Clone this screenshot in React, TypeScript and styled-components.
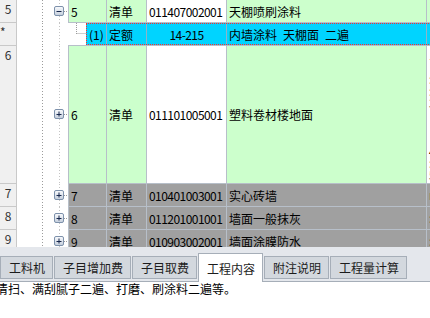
import React from "react";
import styled, { createGlobalStyle } from "styled-components";

const LINE = "#b7bfc9";
const GREEN = "#ccffcc";
const CYAN = "#00d4ff";
const GRAY = "#a0a0a0";
const WHITE = "#ffffff";

const GlobalStyle = createGlobalStyle`
  html, body { margin: 0; padding: 0; background: #fff; overflow: hidden; }
  body { font-family: "Noto Sans CJK SC", sans-serif; }
`;

const Root = styled.div`
  width: 430px;
  height: 318px;
  display: flex;
  flex-direction: column;
  overflow: hidden;
  font-family: "Noto Sans CJK SC", sans-serif;
  font-size: 12px;
  color: #000;
`;

const Grid = styled.div`
  height: 247px;
  flex-shrink: 0;
  display: flex;
  flex-direction: column;
  overflow: hidden;
  background: #fff;
`;

const Row = styled.div<{ $h: number }>`
  display: flex;
  height: ${(p) => p.$h + 1}px;
  flex-shrink: 0;
`;

const RowHead = styled.div<{ $left?: boolean }>`
  width: 17px;
  flex-shrink: 0;
  box-sizing: border-box;
  background: #f0f0f0;
  border-right: 1px solid #c9c9c9;
  border-bottom: 1px solid #c9c9c9;
  line-height: 17px;
  text-align: ${(p) => (p.$left ? "left" : "center")};
  color: #333;
  font-size: 12px;
`;

const Gutter = styled.div<{ $w: number }>`
  width: ${(p) => p.$w}px;
  flex-shrink: 0;
  background: #fff;
  svg { display: block; }
`;

const Spacer = styled.div`
  width: 18px;
  flex-shrink: 0;
  box-sizing: border-box;
  border-bottom: 1px solid ${LINE};
  background: #fff;
  svg { display: block; }
`;

const Cell = styled.div<{ $w: number; $bg: string; $center?: boolean; $first?: boolean; $code?: boolean }>`
  width: ${(p) => p.$w}px;
  flex-shrink: 0;
  box-sizing: border-box;
  background: ${(p) => p.$bg};
  border-right: 1px solid ${LINE};
  border-bottom: 1px solid ${LINE};
  ${(p) => (p.$first ? `border-left: 1px solid ${LINE};` : "")}
  display: flex;
  align-items: center;
  justify-content: ${(p) => (p.$center ? "center" : "flex-start")};
  padding: 0 2px;
  white-space: nowrap;
  overflow: hidden;
  letter-spacing: ${(p) => (p.$code ? "-0.55px" : "0")};
`;

const NoteCell = styled.div<{ $bg: string; $top?: boolean }>`
  width: 80px;
  flex-shrink: 0;
  box-sizing: border-box;
  background: ${(p) => p.$bg};
  border-bottom: 1px solid ${LINE};
  padding: ${(p) => (p.$top ? "3px 2px 0 2px" : "0 2px")};
  white-space: pre;
  line-height: 12px;
  font-size: 12px;
  overflow: hidden;
  display: flex;
  align-items: ${(p) => (p.$top ? "flex-start" : "center")};
`;

const SelWrap = styled.div`
  display: flex;
  flex-shrink: 0;
  box-sizing: border-box;
  border-bottom: 1px solid ${LINE};
`;

const Selected = styled.div`
  display: flex;
  height: 22px;
  box-sizing: border-box;
  background: ${CYAN};
  border-top: 1px dotted #ff2a2a;
  border-bottom: 1px dotted #ff2a2a;
  border-left: 1px dotted #ff2a2a;
`;

const SelCell = styled.div<{ $w: number; $center?: boolean; $code?: boolean }>`
  width: ${(p) => p.$w}px;
  flex-shrink: 0;
  box-sizing: border-box;
  border-right: 1px solid #8fb3c8;
  display: flex;
  align-items: center;
  justify-content: ${(p) => (p.$center ? "center" : "flex-start")};
  padding: 0 2px;
  white-space: nowrap;
  overflow: hidden;
  letter-spacing: ${(p) => (p.$code ? "-0.55px" : "0")};
`;

const TabBar = styled.div`
  height: 35px;
  flex-shrink: 0;
  box-sizing: border-box;
  background: #e4e7ec;
  border-bottom: 1px solid #a6aeb8;
  display: flex;
  align-items: flex-start;
  gap: 1px;
`;

const Tab = styled.div<{ $active?: boolean }>`
  box-sizing: border-box;
  height: ${(p) => (p.$active ? 29 : 23)}px;
  margin-top: ${(p) => (p.$active ? 6 : 9)}px;
  padding: 0 7px 0 8px;
  border: 1px solid #a6aeb8;
  ${(p) => (p.$active ? "border-bottom: none;" : "")}
  background: ${(p) => (p.$active ? "#ffffff" : "#d3d8de")};
  display: flex;
  align-items: center;
  font-size: 12px;
  color: #1c1c1c;
  white-space: nowrap;
`;

const Desc = styled.div`
  flex: 1;
  background: #fff;
  font-size: 12px;
  line-height: 14px;
  margin-left: -4px;
  white-space: nowrap;
  color: #000;
`;

const DOT = "#9c9c9c";

const TreeGutter: React.FC<{ h: number; box?: "+" | "-" }> = ({ h, box }) => {
  const H = h + 1;
  const top = Math.floor((h - 10) / 2);
  const cy = top + 5;
  return (
    <Gutter $w={51}>
      <svg width={51} height={H}>
        <defs>
          <linearGradient id="bx" x1="0" y1="0" x2="0" y2="1">
            <stop offset="0" stopColor="#fbfcfe" />
            <stop offset="1" stopColor="#c3cddb" />
          </linearGradient>
        </defs>
        <line x1={25.5} y1={0} x2={25.5} y2={H} stroke={DOT} strokeDasharray="1 2" />
        {box ? (
          <>
            <line x1={42.5} y1={0} x2={42.5} y2={top} stroke="#c4c4c4" strokeDasharray="1 2" />
            <line x1={42.5} y1={top + 10} x2={42.5} y2={H} stroke="#c4c4c4" strokeDasharray="1 2" />
            <line x1={47} y1={cy + 0.5} x2={51} y2={cy + 0.5} stroke={DOT} strokeDasharray="1 1" />
            <rect x={37.5} y={top + 0.5} width={9} height={9} rx={1.5} fill="url(#bx)" stroke="#7d91ab" />
            <line x1={39.5} y1={cy + 0.5} x2={44.5} y2={cy + 0.5} stroke="#15254a" />
            {box === "+" && <line x1={42} y1={top + 2.5} x2={42} y2={top + 7.5} stroke="#15254a" />}
          </>
        ) : (
          <line x1={42.5} y1={0} x2={42.5} y2={H} stroke="#c4c4c4" strokeDasharray="1 2" />
        )}
      </svg>
    </Gutter>
  );
};

type Item = {
  head: string;
  h: number;
  no: string;
  kind: string;
  code: string;
  name: string;
  bg: string;
  codeBg: string;
  noteBg: string;
  note: string;
  box: "+" | "-";
};

const items: Item[] = [
  { head: "5", h: 22, no: "5", kind: "清单", code: "011407002001", name: "天棚喷刷涂料", bg: GREEN, codeBg: WHITE, noteBg: GREEN, note: "", box: "-" },
  {
    head: "6", h: 137, no: "6", kind: "清单", code: "011101005001", name: "塑料卷材楼地面", bg: GREEN, codeBg: WHITE, noteBg: WHITE,
    note: "1.材料品种:\n\n:2.规格\n:\n3.颜色:\n\n·:\n\n4.压线条:\n:\n5.面层\n\n:", box: "+",
  },
  { head: "7", h: 22, no: "7", kind: "清单", code: "010401003001", name: "实心砖墙", bg: GRAY, codeBg: GRAY, noteBg: GRAY, note: "m", box: "+" },
  { head: "8", h: 22, no: "8", kind: "清单", code: "011201001001", name: "墙面一般抹灰", bg: GRAY, codeBg: GRAY, noteBg: GRAY, note: ":", box: "+" },
  { head: "9", h: 22, no: "9", kind: "清单", code: "010903002001", name: "墙面涂膜防水", bg: GRAY, codeBg: GRAY, noteBg: GRAY, note: ":", box: "+" },
];

const DataRow: React.FC<{ it: Item }> = ({ it }) => (
  <Row $h={it.h}>
    <RowHead>{it.head}</RowHead>
    <TreeGutter h={it.h} box={it.box} />
    <Cell $w={39} $bg={it.bg} $first>{it.no}</Cell>
    <Cell $w={40} $bg={it.bg}>{it.kind}</Cell>
    <Cell $w={80} $bg={it.codeBg} $code>{it.code}</Cell>
    <Cell $w={200} $bg={it.bg}>{it.name}</Cell>
    <NoteCell $bg={it.noteBg} $top={it.h > 30}>{it.note}</NoteCell>
  </Row>
);

const ChildRow: React.FC = () => (
  <Row $h={22}>
    <RowHead $left>*</RowHead>
    <TreeGutter h={22} />
    <Spacer>
      <svg width={18} height={22}>
        <line x1={8.5} y1={0} x2={8.5} y2={11} stroke={DOT} strokeDasharray="1 1" />
        <line x1={8.5} y1={10.5} x2={18} y2={10.5} stroke={DOT} strokeDasharray="1 1" />
      </svg>
    </Spacer>
    <SelWrap>
      <Selected>
        <SelCell $w={20}>(1)</SelCell>
        <SelCell $w={40}>定额</SelCell>
        <SelCell $w={80} $center $code>14-215</SelCell>
        <SelCell $w={200}>内墙涂料&ensp;天棚面&ensp;二遍</SelCell>
        <SelCell $w={60}> </SelCell>
      </Selected>
    </SelWrap>
  </Row>
);

const tabs = ["工料机", "子目增加费", "子目取费", "工程内容", "附注说明", "工程量计算"];

export default function App() {
  return (
    <Root>
      <GlobalStyle />
      <Grid>
        <DataRow it={items[0]} />
        <ChildRow />
        {items.slice(1).map((it) => (
          <DataRow key={it.head} it={it} />
        ))}
      </Grid>
      <TabBar>
        {tabs.map((t) => (
          <Tab key={t} $active={t === "工程内容"}>{t}</Tab>
        ))}
      </TabBar>
      <Desc>清扫、满刮腻子二遍、打磨、刷涂料二遍等。</Desc>
    </Root>
  );
}
